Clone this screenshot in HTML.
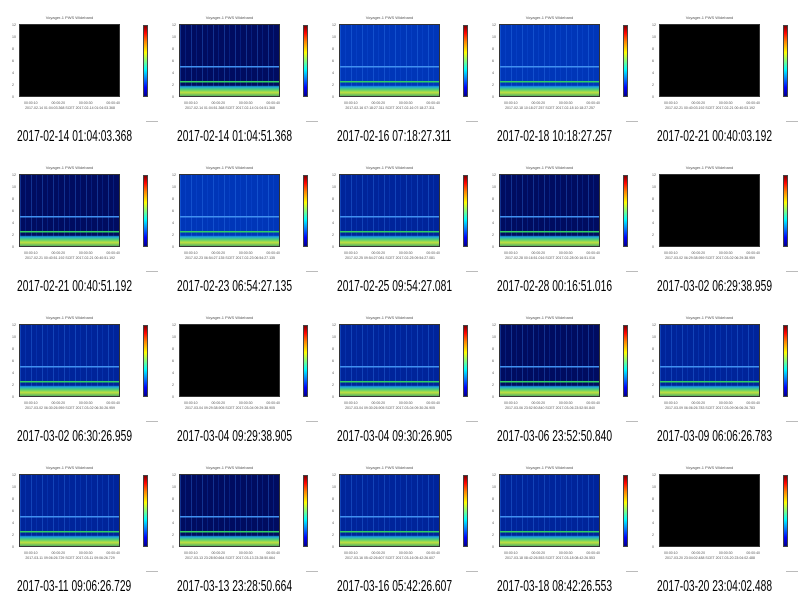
<!DOCTYPE html><html><head><meta charset="utf-8"><style>
body{margin:0;width:800px;height:596px;background:#fff;position:relative;overflow:hidden;font-family:"Liberation Sans",sans-serif}
.c{position:absolute;width:160px;height:150px}
.t{position:absolute;left:19px;top:15px;width:101px;text-align:center;font-size:4px;color:#555;white-space:nowrap}
.p{position:absolute;left:19px;top:24px;width:101px;height:73px;border:1px solid #333;box-sizing:border-box}
.cb{position:absolute;left:143px;top:25px;width:5px;height:72px;background:linear-gradient(to top,#00008f,#0000ff 12%,#00ffff 38%,#7fff7f 50%,#ffff00 62%,#ff7f00 78%,#ff0000 90%,#800000);border:1px solid #444;box-sizing:border-box}
.cap{position:absolute;left:17px;top:128px;font-size:16px;color:#000;white-space:nowrap;transform:scaleX(.64);transform-origin:0 0}
.yl{position:absolute;font-size:3.5px;color:#555}
.xl{position:absolute;top:101px;left:24px;width:96px;font-size:3.5px;color:#555;display:flex;justify-content:space-between}
.xl2{position:absolute;top:106px;left:20px;width:100px;font-size:3.5px;color:#555;white-space:nowrap;text-align:center}
.sm{position:absolute;left:146px;top:121px;width:12px;height:1px;background:#bbb}
</style></head><body><div id="g"></div>
<script>
var caps=["2017-02-14 01:04:03.368","2017-02-14 01:04:51.368","2017-02-16 07:18:27.311","2017-02-18 10:18:27.257","2017-02-21 00:40:03.192","2017-02-21 00:40:51.192","2017-02-23 06:54:27.135","2017-02-25 09:54:27.081","2017-02-28 00:16:51.016","2017-03-02 06:29:38.959","2017-03-02 06:30:26.959","2017-03-04 09:29:38.905","2017-03-04 09:30:26.905","2017-03-06 23:52:50.840","2017-03-09 06:06:26.783","2017-03-11 09:06:26.729","2017-03-13 23:28:50.664","2017-03-16 05:42:26.607","2017-03-18 08:42:26.553","2017-03-20 23:04:02.488"];
var k=[0,1,3,3,0,1,3,2,1,0,2,0,2,1,2,2,1,2,2,0];
var base=["#000","#000c60","#00249a","#0036b8"];
var h="";
for(var i=0;i<20;i++){var r=Math.floor(i/5),c=i%5;var bg;
if(k[i]==0)bg="#000";else{var b=base[k[i]];
bg="linear-gradient(to bottom,transparent 0,transparent 85%,#20a0e0 87%,#50d070 91%,#c0e040 95%,#50b060 100%),linear-gradient(to bottom,transparent 58%,#4090f0 58%,#4090f0 60%,transparent 60%,transparent 79%,#30d060 79%,#30d060 81%,transparent 81%),repeating-linear-gradient(to right,rgba(60,140,255,.3) 0 1px,transparent 1px 5px,rgba(30,100,240,.2) 5px 6px,transparent 6px 11px),"+b;}
h+='<div class="c" style="left:'+(c*160)+'px;top:'+(r*150)+'px"><div class="t">Voyager-1 PWS Wideband</div><div class="p" style="background:'+bg+'"></div><div class="cb"></div>';
var ys=["12","10","8","6","4","2","0"];for(var j=0;j<7;j++)h+='<div class="yl" style="left:12px;top:'+(23+j*12)+'px">'+ys[j]+'</div>';
h+='<div class="xl"><span>00:00:10</span><span>00:00:20</span><span>00:00:30</span><span>00:00:40</span></div><div class="xl2">'+caps[i]+'   SCET   '+caps[i]+'</div><div class="sm"></div><div class="cap">'+caps[i]+'</div></div>';}
document.getElementById("g").innerHTML=h;
</script></body></html>
